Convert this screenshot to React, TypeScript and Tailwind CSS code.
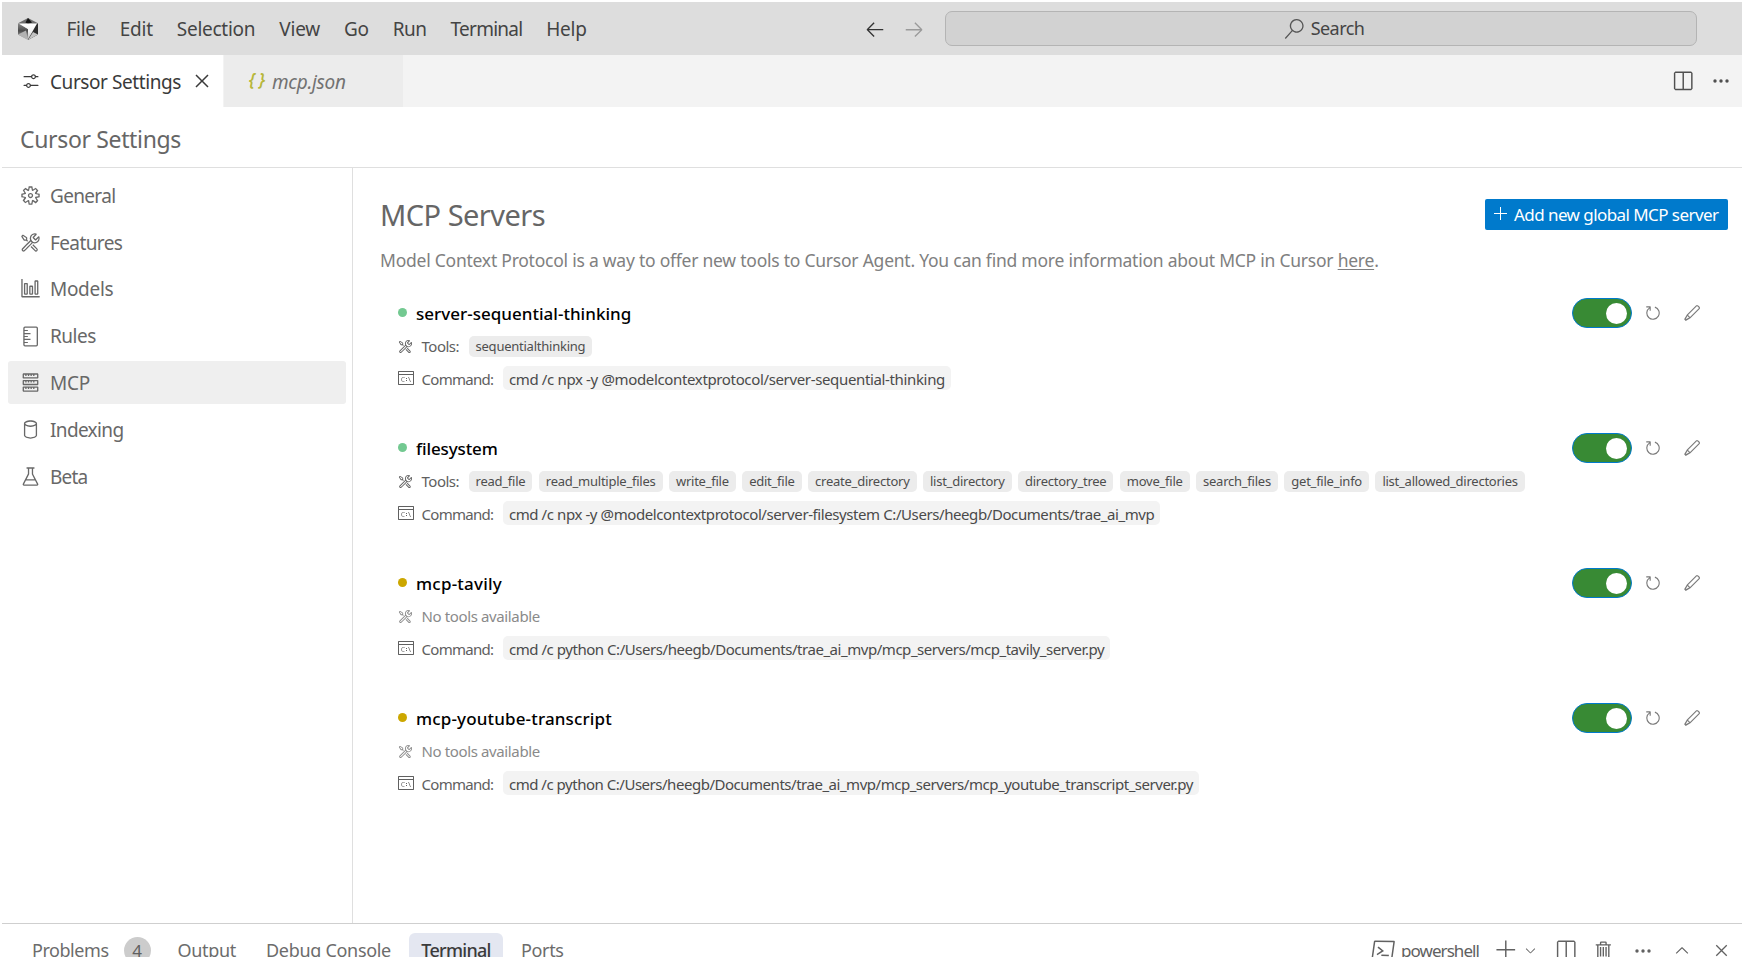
import React from "react";
import type { IconType } from "react-icons";
import {
  VscAdd,
  VscArrowLeft,
  VscArrowRight,
  VscBeaker,
  VscChevronDown,
  VscChevronUp,
  VscClose,
  VscDatabase,
  VscEdit,
  VscGear,
  VscGraph,
  VscRefresh,
  VscSearch,
  VscServer,
  VscSettings,
  VscSplitHorizontal,
  VscTerminalCmd,
  VscTerminalPowershell,
  VscTools,
  VscTrash,
} from "react-icons/vsc";

function CursorLogo() {
  return (
    <svg viewBox="0 0 20 22" className="h-[22px] w-5 shrink-0">
      <defs>
        <linearGradient id="logo-left" x1="0" y1="0" x2="0" y2="1">
          <stop offset="0" stopColor="#8a8a8a" />
          <stop offset="0.45" stopColor="#4a4a4a" />
          <stop offset="1" stopColor="#c4c4c4" />
        </linearGradient>
        <linearGradient id="logo-face" x1="0" y1="0" x2="0" y2="1">
          <stop offset="0" stopColor="#ffffff" />
          <stop offset="0.5" stopColor="#f2f2f2" />
          <stop offset="1" stopColor="#b4b4b4" />
        </linearGradient>
      </defs>
      <path d="M10 0 L20 5.3 L10 9 L0 5.3 Z" fill="#6d6d6d" />
      <path d="M10 0 L14 4.5 L10 6 L7.5 4.5 Z" fill="#161616" />
      <path d="M0 5.3 L10 11 L10 22 L0 16.5 Z" fill="url(#logo-left)" />
      <path d="M0 16.5 L8 12.5 L10 22 Z" fill="#b2b2b2" />
      <path d="M20 5.3 L20 16.5 L10 22 L10 11 Z" fill="#2c2c2c" />
      <path d="M15 14 L20 16.5 L10 22 Z" fill="#c2c2c2" />
      <path d="M1 5.6 L19 5.6 L10 21.5 L10 11 Z" fill="url(#logo-face)" />
    </svg>
  );
}

function RulesIcon({ className }: { className?: string }) {
  return (
    <svg viewBox="0 0 16 16" className={className} fill="none" stroke="currentColor">
      <rect x="3" y="0.9" width="10.2" height="14.2" rx="0.8" />
      <path d="M3 3.5h3M3 5.8h5M3 8h3M3 10.2h5M3 12.5h3" strokeWidth="0.8" />
    </svg>
  );
}

function MoreIcon({ className }: { className?: string }) {
  return (
    <svg viewBox="0 0 20 20" className={className} fill="currentColor">
      <circle cx="4" cy="10" r="1.7" />
      <circle cx="10" cy="10" r="1.7" />
      <circle cx="16" cy="10" r="1.7" />
    </svg>
  );
}

const menus = [
  { label: "File", tracking: "tracking-[-0.015em]" },
  { label: "Edit", tracking: "tracking-[-0.013em]" },
  { label: "Selection", tracking: "tracking-[-0.014em]" },
  { label: "View", tracking: "tracking-[-0.012em]" },
  { label: "Go", tracking: "tracking-[-0.015em]" },
  { label: "Run", tracking: "tracking-[-0.025em]" },
  { label: "Terminal", tracking: "tracking-[-0.04em]" },
  { label: "Help", tracking: "tracking-[-0.015em]" },
];

type NavItem = {
  label: string;
  icon: IconType | typeof RulesIcon;
  tracking: string;
  active?: boolean;
};

const nav: NavItem[] = [
  { label: "General", icon: VscGear, tracking: "tracking-[-0.035em]" },
  { label: "Features", icon: VscTools, tracking: "tracking-[-0.032em]" },
  { label: "Models", icon: VscGraph, tracking: "tracking-[-0.016em]" },
  { label: "Rules", icon: RulesIcon, tracking: "tracking-[-0.025em]" },
  { label: "MCP", icon: VscServer, tracking: "tracking-[-0.012em]", active: true },
  { label: "Indexing", icon: VscDatabase, tracking: "tracking-[-0.034em]" },
  { label: "Beta", icon: VscBeaker, tracking: "tracking-[-0.043em]" },
];

type Server = {
  name: string;
  nameTracking: string;
  online: boolean;
  tools: string[];
  command: string;
  commandTracking: string;
};

const servers: Server[] = [
  {
    name: "server-sequential-thinking",
    nameTracking: "tracking-[0.001em]",
    online: true,
    tools: ["sequentialthinking"],
    command: "cmd /c npx -y @modelcontextprotocol/server-sequential-thinking",
    commandTracking: "tracking-[-0.0235em]",
  },
  {
    name: "filesystem",
    nameTracking: "tracking-[-0.007em]",
    online: true,
    tools: [
      "read_file",
      "read_multiple_files",
      "write_file",
      "edit_file",
      "create_directory",
      "list_directory",
      "directory_tree",
      "move_file",
      "search_files",
      "get_file_info",
      "list_allowed_directories",
    ],
    command: "cmd /c npx -y @modelcontextprotocol/server-filesystem C:/Users/heegb/Documents/trae_ai_mvp",
    commandTracking: "tracking-[-0.0275em]",
  },
  {
    name: "mcp-tavily",
    nameTracking: "tracking-[0.013em]",
    online: false,
    tools: [],
    command: "cmd /c python C:/Users/heegb/Documents/trae_ai_mvp/mcp_servers/mcp_tavily_server.py",
    commandTracking: "tracking-[-0.0303em]",
  },
  {
    name: "mcp-youtube-transcript",
    nameTracking: "tracking-[0.009em]",
    online: false,
    tools: [],
    command: "cmd /c python C:/Users/heegb/Documents/trae_ai_mvp/mcp_servers/mcp_youtube_transcript_server.py",
    commandTracking: "tracking-[-0.0318em]",
  },
];

function TitleBar() {
  return (
    <header className="flex h-[53px] shrink-0 items-center bg-[#dddddd] pl-4 text-[19px] text-[#444444]">
      <CursorLogo />
      <nav className="ml-[28.5px] flex gap-[24px] pt-[2px]">
        {menus.map((m) => (
          <span key={m.label} className={m.tracking}>
            {m.label}
          </span>
        ))}
      </nav>
      <div className="ml-auto flex items-center gap-[17px]">
        <VscArrowLeft className="h-[22px] w-[22px] text-[#333333]" />
        <VscArrowRight className="h-[22px] w-[22px] text-[#9a9a9a]" />
      </div>
      <div className="mr-[45px] ml-[20px] flex h-[35px] w-[752px] items-center justify-center gap-[7px] rounded-[7px] border border-[#b4b4b4] bg-[#d2d2d2] pl-[6px]">
        <VscSearch className="h-5 w-5 text-[#555555]" />
        <span className="text-[18px] tracking-[-0.03em]">Search</span>
      </div>
    </header>
  );
}

function TabBar() {
  return (
    <div className="flex h-[52px] shrink-0 items-stretch bg-[#f3f3f3] text-[19px]">
      <div className="flex w-[221px] items-center bg-white pl-[19px] text-[#3a3a3a]">
        <VscSettings className="mr-[9px] h-5 w-5" />
        <span className="pt-[2px] tracking-[-0.022em]">Cursor Settings</span>
        <VscClose className="ml-[9px] h-[24px] w-[24px]" />
      </div>
      <div className="flex w-[180px] items-center border-l border-[#f3f3f3] bg-[#ececec] pl-[25px] italic">
        <span className="mr-[7px] flex gap-[4px] pb-[3px] text-[17px] font-semibold text-[#b7b73b]">
          <span>{"{"}</span>
          <span>{"}"}</span>
        </span>
        <span className="pt-[2px] tracking-[-0.015em] text-[#727272]">mcp.json</span>
      </div>
      <div className="ml-auto flex items-center gap-[17px] pr-[11px] text-[#4f4f4f]">
        <VscSplitHorizontal className="h-[23px] w-[23px]" />
        <MoreIcon className="h-5 w-5" />
      </div>
    </div>
  );
}

function Sidebar() {
  return (
    <aside className="flex w-[351px] shrink-0 flex-col gap-[3.9px] border-r border-[#dfdfdf] pt-[5.4px] pr-[6px] pl-[6px]">
      {nav.map(({ label, icon: Icon, tracking, active }) => (
        <div
          key={label}
          className={`flex h-[43px] shrink-0 items-center gap-[9px] rounded-[3px] pt-px pl-[12px] text-[19px] text-[#686868] ${
            active ? "bg-[#efefef]" : ""
          }`}
        >
          <Icon className="h-[21px] w-[21px]" />
          <span className={`pt-[1px] ${tracking}`}>{label}</span>
        </div>
      ))}
    </aside>
  );
}

function ServerRow({ server }: { server: Server }) {
  const hasTools = server.tools.length > 0;
  return (
    <section className="flex h-[135px] flex-col pr-[14px] pl-[17.5px]">
      <div className="flex h-[30px] items-center">
        <span
          className={`mb-[1px] h-[9.5px] w-[9.5px] shrink-0 rounded-full ${
            server.online ? "bg-[#73c991]" : "bg-[#cca700]"
          }`}
        />
        <h2 className={`ml-[9px] pt-[1px] text-[17px] font-medium text-black ${server.nameTracking}`}>
          {server.name}
        </h2>
        <div className="ml-auto flex items-center">
          <span className="flex h-[30px] w-[60px] items-center justify-end rounded-full border border-[#007acc] bg-[#388a34] pr-[4px]">
            <span className="h-[21px] w-[21px] rounded-full bg-white" />
          </span>
          <VscRefresh className="ml-[12px] h-[18px] w-[18px] text-[#7a7a7a]" />
          <VscEdit className="mr-[27px] ml-[21px] h-[18px] w-[18px] text-[#7a7a7a]" />
        </div>
      </div>
      <div
        className={`mt-[7px] flex h-[22px] items-center text-[15px] ${hasTools ? "text-[#606060]" : "text-[#8a8a8a]"}`}
      >
        <VscTools className="mr-[9px] h-[15px] w-[15px] shrink-0" />
        {hasTools ? (
          <>
            <span className="mr-[9.5px] pt-[1px] tracking-[-0.033em]">Tools:</span>
            <div className="flex gap-[6.4px]">
              {server.tools.map((tool) => (
                <span
                  key={tool}
                  className="flex h-[21px] items-center rounded-[5px] bg-[#ececec] px-[7px] pt-[2px] text-[13px] tracking-[-0.0185em] text-[#4e4e4e]"
                >
                  {tool}
                </span>
              ))}
            </div>
          </>
        ) : (
          <span className="tracking-[-0.025em]">No tools available</span>
        )}
      </div>
      <div className="mt-[9px] flex h-6 items-center text-[15px] text-[#606060]">
        <VscTerminalCmd className="mr-[8px] h-4 w-4 shrink-0" />
        <span className="mr-[9.5px] pt-[2px] tracking-[-0.047em]">Command:</span>
        <span
          className={`flex h-6 items-center rounded-[5px] bg-[#f3f3f3] px-[6px] pt-[2px] whitespace-nowrap text-[#4a4a4a] ${server.commandTracking}`}
        >
          {server.command}
        </span>
      </div>
    </section>
  );
}

function Main() {
  return (
    <main className="flex flex-1 flex-col pl-[27px]">
      <div className="mt-[30px] flex h-[32px] items-center justify-between pr-[14px]">
        <h1 className="pt-[2px] text-[29px] leading-8 tracking-[-0.018em] text-[#666666]">MCP Servers</h1>
        <button className="flex h-[31px] w-[243px] items-center rounded-[2px] bg-[#007acc] pl-[8px] text-[17px] text-white">
          <VscAdd className="mr-[5px] h-4 w-4" />
          <span className="pt-[1px] tracking-[-0.033em] whitespace-nowrap">Add new global MCP server</span>
        </button>
      </div>
      <p className="mt-[17px] text-[17.5px] leading-[26px] tracking-[-0.0135em] text-[#808080]">
        Model Context Protocol is a way to offer new tools to Cursor Agent. You can find more information about MCP in
        Cursor <a className="underline underline-offset-2">here</a>.
      </p>
      <div className="mt-[25px] flex flex-col">
        {servers.map((s) => (
          <ServerRow key={s.name} server={s} />
        ))}
      </div>
    </main>
  );
}

function Panel() {
  return (
    <footer className="flex h-[34px] shrink-0 items-start overflow-hidden border-t border-[#cfcfcf] pt-[9px] text-[18px] text-[#6c6c6c]">
      <div className="flex h-[35px] shrink-0 items-center">
        <span className="ml-[30px] tracking-[-0.025em]">Problems</span>
        <span className="ml-[15px] flex h-[27px] w-[27px] items-center justify-center rounded-full bg-[#cccccc] text-[17px] text-[#606060]">
          4
        </span>
        <span className="ml-[27px] tracking-[-0.018em]">Output</span>
        <span className="ml-[30px] tracking-[-0.017em]">Debug Console</span>
        <span className="ml-[18px] flex h-[35px] w-[94px] items-center justify-center rounded-[6px] bg-[#e4e7f1] font-medium tracking-[-0.04em] text-[#3b3b3b]">
          Terminal
        </span>
        <span className="ml-[18px] tracking-[-0.019em]">Ports</span>
      </div>
      <div className="ml-auto flex h-[35px] shrink-0 items-center text-[#616161]">
        <VscTerminalPowershell className="h-6 w-6" />
        <span className="ml-[6px] text-[17px] tracking-[-0.055em]">powershell</span>
        <VscAdd className="ml-[16px] h-[23px] w-[23px]" />
        <VscChevronDown className="ml-[5px] h-[15px] w-[15px]" />
        <VscSplitHorizontal className="ml-[16px] h-[23px] w-[23px]" />
        <VscTrash className="ml-[16px] h-[22px] w-[22px]" />
        <MoreIcon className="ml-[18px] h-5 w-5" />
        <VscChevronUp className="ml-[19px] h-5 w-5" />
        <VscClose className="mr-[10px] ml-[19px] h-[21px] w-[21px]" />
      </div>
    </footer>
  );
}

export default function App() {
  return (
    <div className="flex h-[959px] w-[1744px] flex-col bg-white p-[2px] font-['Noto_Sans',sans-serif]">
      <TitleBar />
      <TabBar />
      <div className="flex h-[61px] shrink-0 items-center border-b border-[#dfdfdf] pt-[4px] pl-[18px] text-[23px] tracking-[-0.015em] text-[#666666]">
        Cursor Settings
      </div>
      <div className="flex min-h-0 flex-1">
        <Sidebar />
        <Main />
      </div>
      <Panel />
    </div>
  );
}
